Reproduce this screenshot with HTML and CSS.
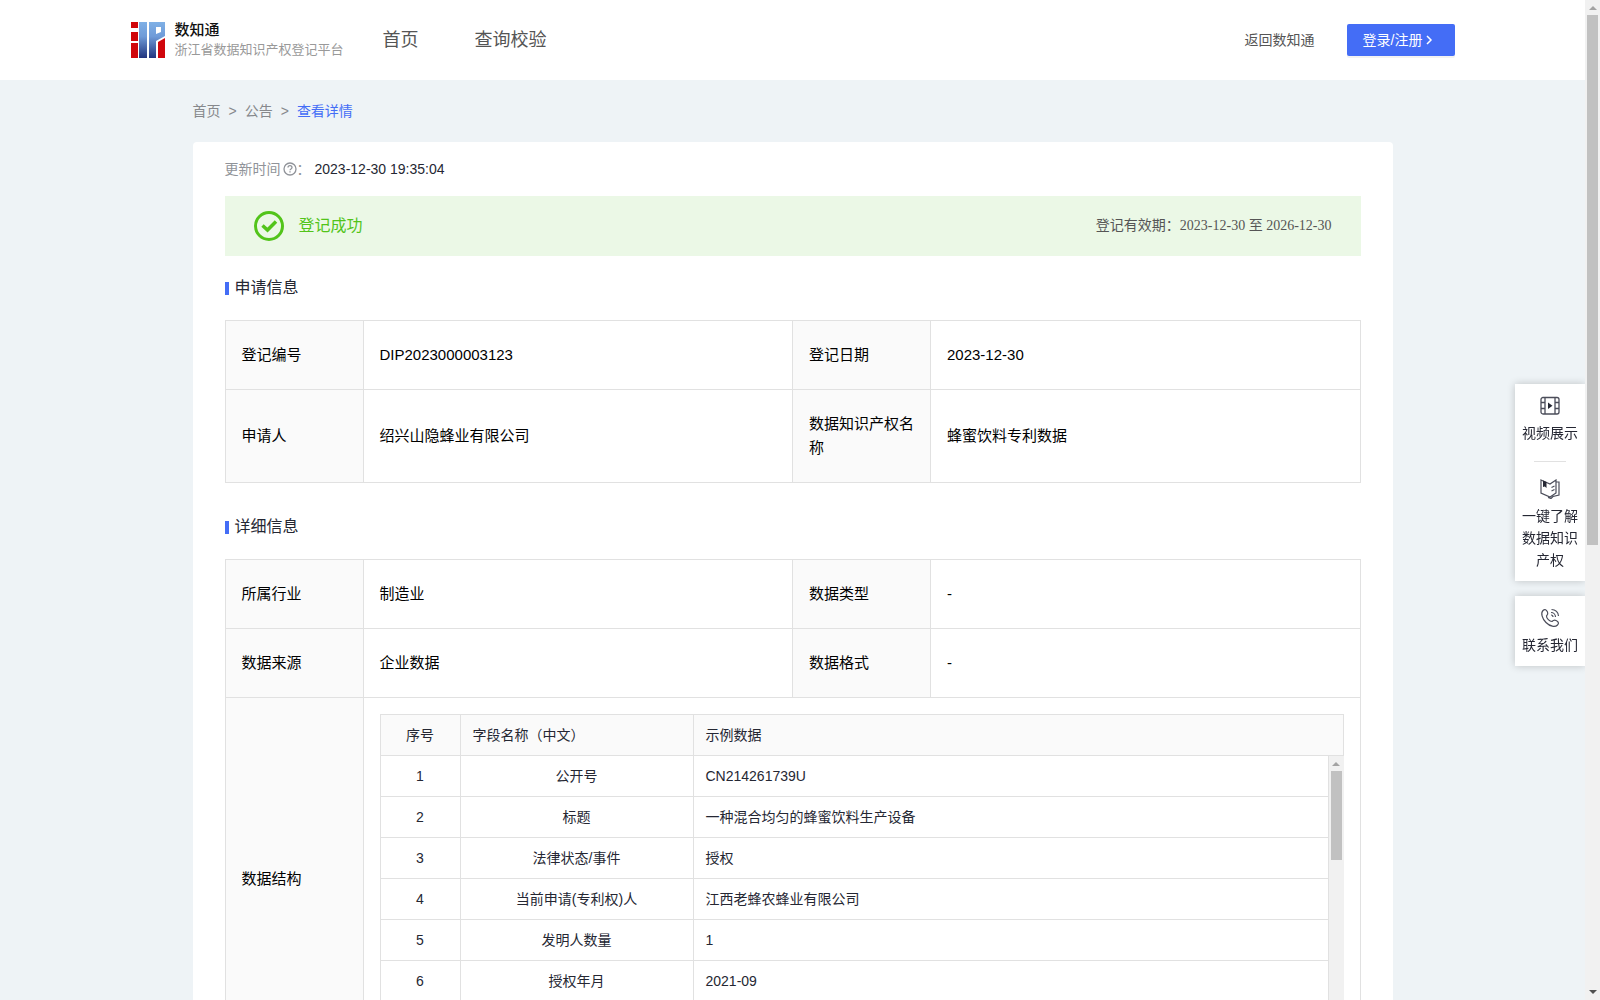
FILE: index.html
```html
<!DOCTYPE html>
<html lang="zh-CN">
<head>
    <meta charset="UTF-8">
    <meta name="viewport" content="width=device-width, initial-scale=1.0">
    <title>浙江省数据知识产权登记平台</title>
    <link rel="stylesheet" href="styles.css">
</head>
<body>
    <div class="page">
        <header class="header">
            <div class="header-inner">
                <a class="logo" href="#">
                    <svg width="34" height="36" viewBox="0 0 34 36">
                        <defs>
                            <linearGradient id="blue" x1="0" y1="0" x2="0" y2="1">
                                <stop offset="0" stop-color="#7fb0e6"/>
                                <stop offset="0.4" stop-color="#6f9bd8"/>
                                <stop offset="1" stop-color="#22357f"/>
                            </linearGradient>
                        </defs>
                        <path fill="#d0060c" d="M0 0h7v6H0zM0 10h7v9H0zM0 21h7v15H0zM27 20l7-4v20h-7z"/>
                        <path fill="url(#blue)" d="M8 0h8v36H8zM18 0h16v14l-9 5v17h-7zM25 5v7l5-2V5z" fill-rule="evenodd"/>
                    </svg>
                    <span class="logo-text">
                        <strong>数知通</strong>
                        <small>浙江省数据知识产权登记平台</small>
                    </span>
                </a>
                <nav class="nav">
                    <a href="#">首页</a>
                    <a href="#">查询校验</a>
                </nav>
                <a class="back-link" href="#">返回数知通</a>
                <button class="login-btn" type="button">登录/注册
                    <svg width="14" height="14" viewBox="0 0 14 14"><path d="M5 3l4 4-4 4" fill="none" stroke="#fff" stroke-width="1.5"/></svg>
                </button>
            </div>
        </header>

        <main class="main">
            <div class="breadcrumb">
                <a href="#">首页</a><span>&gt;</span><a href="#">公告</a><span>&gt;</span><a class="active" href="#">查看详情</a>
            </div>

            <div class="card">
                <div class="update-time">
                    更新时间<svg width="14" height="14" viewBox="0 0 14 14" fill="none" stroke="#909399" stroke-width="1.3">
                        <circle cx="7" cy="7" r="6"/>
                        <path d="M5 5.6c0-2.6 4-2.6 4 0C9 7 7 6.9 7 8.3M7 9.3v1.2"/>
                    </svg>：<time>2023-12-30 19:35:04</time>
                </div>

                <div class="status">
                    <svg width="30" height="30" viewBox="0 0 30 30" fill="none" stroke="#52c41a">
                        <circle cx="15" cy="15" r="13.5" stroke-width="3"/>
                        <path d="M8.5 14.5l5 4.5 8.500-8.500" stroke-width="3.5"/>
                    </svg>
                    <span class="status-title">登记成功</span>
                    <span class="status-date">登记有效期：2023-12-30 至 2026-12-30</span>
                </div>

                <h2>申请信息</h2>
                <table class="info">
                    <colgroup><col class="col-label"><col><col class="col-label"><col></colgroup>
                    <tr>
                        <th>登记编号</th>
                        <td>DIP2023000003123</td>
                        <th>登记日期</th>
                        <td>2023-12-30</td>
                    </tr>
                    <tr>
                        <th>申请人</th>
                        <td>绍兴山隐蜂业有限公司</td>
                        <th>数据知识产权名称</th>
                        <td>蜂蜜饮料专利数据</td>
                    </tr>
                </table>

                <h2>详细信息</h2>
                <table class="info">
                    <colgroup><col class="col-label"><col><col class="col-label"><col></colgroup>
                    <tr>
                        <th>所属行业</th>
                        <td>制造业</td>
                        <th>数据类型</th>
                        <td>-</td>
                    </tr>
                    <tr>
                        <th>数据来源</th>
                        <td>企业数据</td>
                        <th>数据格式</th>
                        <td>-</td>
                    </tr>
                    <tr>
                        <th>数据结构</th>
                        <td class="nested" colspan="3">
                            <table class="fields">
                                <colgroup><col class="col-no"><col class="col-name"><col></colgroup>
                                <tr>
                                    <th class="center">序号</th>
                                    <th>字段名称（中文）</th>
                                    <th>示例数据</th>
                                </tr>
                            </table>
                            <div class="fields-body">
                                <table class="fields">
                                    <colgroup><col class="col-no"><col class="col-name"><col></colgroup>
                                    <tr><td>1</td><td>公开号</td><td>CN214261739U</td></tr>
                                    <tr><td>2</td><td>标题</td><td>一种混合均匀的蜂蜜饮料生产设备</td></tr>
                                    <tr><td>3</td><td>法律状态/事件</td><td>授权</td></tr>
                                    <tr><td>4</td><td>当前申请(专利权)人</td><td>江西老蜂农蜂业有限公司</td></tr>
                                    <tr><td>5</td><td>发明人数量</td><td>1</td></tr>
                                    <tr><td>6</td><td>授权年月</td><td>2021-09</td></tr>
                                    <tr><td></td><td></td><td></td></tr>
                                </table>
                                <div class="scrollbar">
                                    <span class="arrow-up"></span>
                                    <span class="thumb thumb-small"></span>
                                </div>
                            </div>
                        </td>
                    </tr>
                </table>
            </div>
        </main>
    </div>

    <div class="scrollbar">
        <span class="arrow-up"></span>
        <span class="thumb thumb-page"></span>
        <span class="arrow-down"></span>
    </div>

    <aside class="side">
        <div class="side-box">
            <a href="#">
                <svg width="20" height="20" viewBox="0 0 20 20" fill="none" stroke="#4b4d5a" stroke-width="1.3">
                    <rect x="1" y="1.5" width="18" height="16.5" rx="2"/>
                    <path d="M5 1.5V18M15 1.5V18M1 6.5h4M1 12.5h4M15 6.5h4M15 12.5h4"/>
                    <path d="M8 6.5v6.5l4.5-3.2z" fill="#252733" stroke="none"/>
                </svg>
                视频展示
            </a>
            <hr>
            <a href="#">
                <svg width="20" height="20" viewBox="0 0 20 20" fill="none" stroke="#4b4d5a" stroke-width="1.2">
                    <path d="M1 1l9 4 6-4v13l-6 4-9-4zM16.500 3H19v13l-6 1.500-2 2-3-1"/>
                    <path d="M11.500 8.500l3-1.500M11.500 12l3-1.500"/>
                    <path d="M3 1.500l3.500 1.500v6L4.800 7.500 3 8z" fill="#252733" stroke="none"/>
                </svg>
                一键了解数据知识产权
            </a>
        </div>
        <div class="side-box">
            <a href="#">
                <svg width="20" height="20" viewBox="0 0 20 20" fill="none" stroke="#4b4d5a" stroke-width="1.2">
                    <path d="M3 2.500c2-2 3.500-.5 4.500 1.500s.5 2.500-1 4c0 2.500 3 5.500 5.500 5.500 1.500-1.500 2-2 4-1s3.500 2.500 1.500 4.500c-2.500 2.500-7.500 1.500-11.500-2.500S.5 5 3 2.500z"/>
                    <path d="M11 4.500c2.500 0 4.500 2 4.500 4.500M11.500 1.500c4 0 7 3 7 6.500M11 7c1.200 0 2 .8 2 2"/>
                </svg>
                联系我们
            </a>
        </div>
    </aside>
</body>
</html>
```
FILE: styles.css
```css
* {
    box-sizing: border-box;
}
body {
    margin: 0;
    display: flex;
    height: 100vh;
    overflow: hidden;
    background-color: #eef3f6;
    color: #252733;
    font-family: "Liberation Sans", "Noto Sans CJK SC", sans-serif;
    font-size: 14px;
    line-height: 22px;
}
a {
    color: inherit;
    text-decoration: none;
}
svg {
    flex: none;
}
.page {
    flex: 1;
    overflow: hidden;
}

/* header */
.header {
    background-color: #fff;
}
.header-inner {
    display: flex;
    align-items: center;
    max-width: 1324px;
    height: 80px;
    margin: 0 auto;
}
.logo {
    display: flex;
    align-items: center;
    gap: 10px;
    width: 252px;
}
.logo-text strong, .logo-text small {
    display: block;
    line-height: 20px;
    white-space: nowrap;
}
.logo-text strong {
    font-size: 15px;
    font-weight: 500;
    color: #111;
}
.logo-text small {
    font-size: 13px;
    color: #999;
}
.nav {
    display: flex;
    gap: 56px;
    flex: 1;
    font-size: 18px;
    color: #555;
}
.back-link {
    margin-right: 32px;
    color: #555;
}
.login-btn {
    display: flex;
    align-items: center;
    width: 108px;
    height: 32px;
    padding: 0 16px;
    border: none;
    border-radius: 2px;
    background-color: #446df6;
    box-shadow: 0 2px 0 rgba(0, 0, 0, 0.05);
    color: #fff;
    font-family: inherit;
    font-size: 14px;
    line-height: 22px;
    white-space: nowrap;
    cursor: pointer;
}

/* content */
.main {
    max-width: 1200px;
    margin: 0 auto;
}
.breadcrumb {
    padding: 20px 0;
    color: #86888c;
}
.breadcrumb span {
    margin: 0 8px;
}
.breadcrumb .active {
    color: #446df6;
}
.card {
    padding: 16px 32px;
    border-radius: 4px;
    background-color: #fff;
}
.update-time {
    display: flex;
    align-items: center;
    color: #909399;
}
.update-time svg {
    margin-left: 2px;
}
.update-time time {
    margin-left: 4px;
    color: #252733;
}
.status {
    display: flex;
    align-items: center;
    height: 60px;
    margin-top: 16px;
    padding: 0 29px;
    background-color: #ebf8e6;
}
.status-title {
    flex: 1;
    margin-left: 15px;
    font-size: 16px;
    color: #52c41a;
}
.status-date {
    font-family: "Liberation Serif", "Noto Sans CJK SC", serif;
    color: #555;
}
h2 {
    display: flex;
    align-items: center;
    gap: 6px;
    margin: 20px 0;
    font-size: 16px;
    font-weight: normal;
    line-height: 24px;
}
h2::before {
    content: "";
    width: 4px;
    height: 13px;
    background-color: #446df6;
}
table {
    width: 100%;
    border-collapse: collapse;
    table-layout: fixed;
}
th, td {
    border: 1px solid #e1e1e1;
    font-weight: normal;
    text-align: left;
}
th {
    background-color: #fafafa;
}
.info {
    margin-bottom: 32px;
    font-size: 15px;
    line-height: 24px;
    color: #000;
}
.info th, .info td {
    padding: 22px 16px;
}
.col-label {
    width: 138px;
}
.info .nested {
    padding: 16px;
}

/* field list */
.fields {
    font-size: 14px;
    line-height: 22px;
    color: #252733;
}
.info .fields th, .info .fields td {
    height: 41px;
    padding: 0 12px;
}
.col-no {
    width: 80px;
}
.col-name {
    width: 233px;
}
.fields .center, .fields td:nth-child(1), .fields td:nth-child(2) {
    text-align: center;
}
.fields-body {
    display: flex;
    margin-top: -1px;
}

/* scrollbars */
.scrollbar {
    display: flex;
    flex: none;
    flex-direction: column;
    align-items: center;
    width: 15px;
    background-color: #f1f1f1;
}
.fields-body .scrollbar {
    margin-top: 1px;
}
.arrow-up, .arrow-down {
    border: 4px solid transparent;
}
.arrow-up {
    margin: 2px 0 5px;
    border-bottom-color: #a3a3a3;
}
.arrow-down {
    margin: auto 0 2px;
    border-top-color: #505050;
}
.thumb {
    width: 11px;
    background-color: #c1c1c1;
}
.thumb-page {
    height: 53%;
}
.thumb-small {
    height: 89px;
}

/* side menu */
.side {
    position: fixed;
    top: 384px;
    right: 15px;
    width: 70px;
}
.side-box {
    margin-bottom: 15px;
    padding: 12px 6px 10px;
    background-color: #fff;
    box-shadow: 0 0 8px rgba(0, 0, 0, 0.2);
    clip-path: inset(-10px 0 -10px -10px);
    text-align: center;
}
.side-box a {
    display: block;
}
.side-box svg {
    display: block;
    margin: 0 auto 6px;
}
.side-box hr {
    width: 32px;
    margin: 17px auto;
    border: none;
    border-top: 1px solid #e1e1e1;
}
```
